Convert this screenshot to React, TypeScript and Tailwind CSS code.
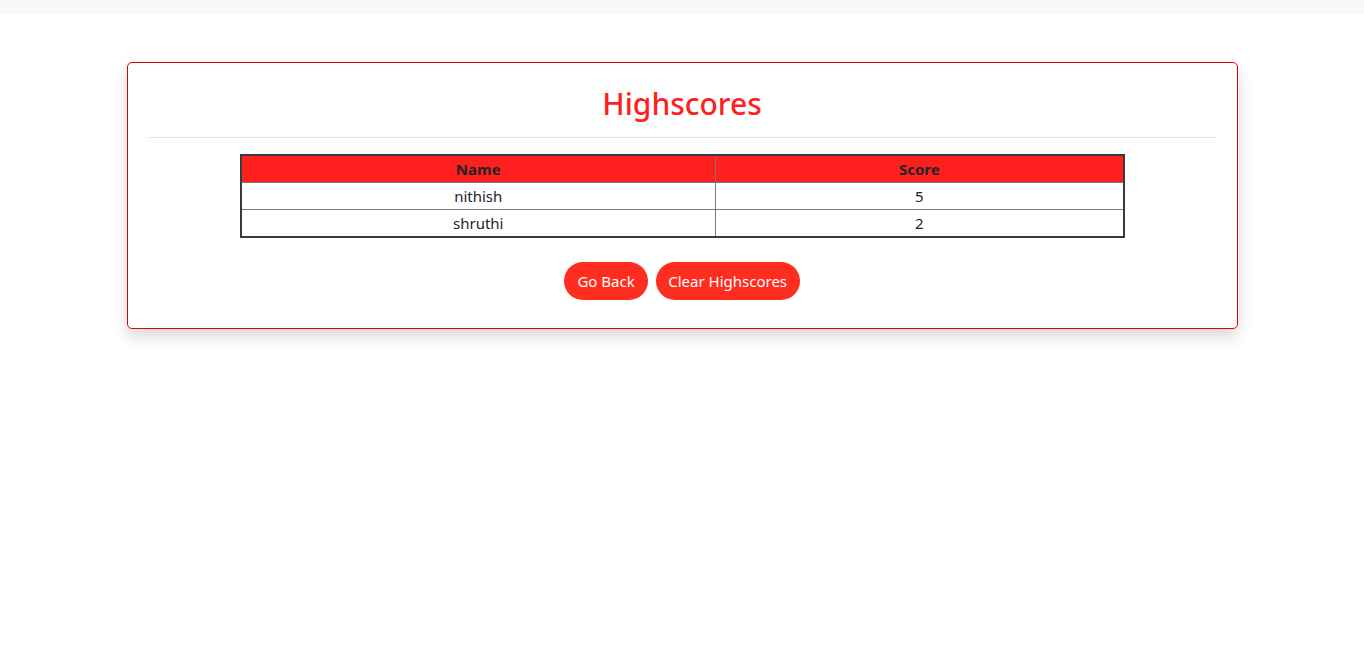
import React from "react";

interface Score {
  name: string;
  score: number;
}

const scores: Score[] = [
  { name: "nithish", score: 5 },
  { name: "shruthi", score: 2 },
];

const App: React.FC = () => {
  return (
    <div
      className="min-h-screen bg-white text-[#212529]"
      style={{ fontFamily: '"Noto Sans", "Open Sans", sans-serif' }}
    >
      {/* top strip */}
      <div className="h-[14px] bg-[#f8f9fa]"></div>

      <div className="flex justify-center pt-[48px]">
        <div className="w-[1111px] rounded-[5px] border border-[#e00000] bg-white px-5 pt-[21px] pb-[28px] shadow-[0_8px_16px_rgba(0,0,0,0.15)]">
          <h1 className="text-center text-[30px] leading-[40px] font-medium text-[#ff1f1f]">
            Highscores
          </h1>
          <hr className="mt-[13px] border-t border-[#e3e3e3]" />

          <div className="mt-[16px] flex justify-center">
            <table className="w-[885px] border-collapse border-2 border-[#3a3a3a] text-[15px]">
              <thead>
                <tr className="bg-[#ff1f1f]">
                  <th className="w-[475px] border border-[#7a7a7a] py-[2px] leading-[22px] font-bold text-[#212529]">
                    Name
                  </th>
                  <th className="border border-[#7a7a7a] py-[2px] leading-[22px] font-bold text-[#212529]">
                    Score
                  </th>
                </tr>
              </thead>
              <tbody>
                {scores.map((s) => (
                  <tr key={s.name}>
                    <td className="border border-[#7a7a7a] py-[2px] text-center leading-[22px]">
                      {s.name}
                    </td>
                    <td className="border border-[#7a7a7a] py-[2px] text-center leading-[22px]">
                      {s.score}
                    </td>
                  </tr>
                ))}
              </tbody>
            </table>
          </div>

          <div className="mt-[24px] flex justify-center gap-2">
            <button className="h-[38px] rounded-full bg-[#ff2d20] px-[13px] text-[15px] text-white">
              Go Back
            </button>
            <button className="h-[38px] rounded-full bg-[#ff2d20] px-[12.5px] text-[15px] text-white">
              Clear Highscores
            </button>
          </div>
        </div>
      </div>
    </div>
  );
};

export default App;
